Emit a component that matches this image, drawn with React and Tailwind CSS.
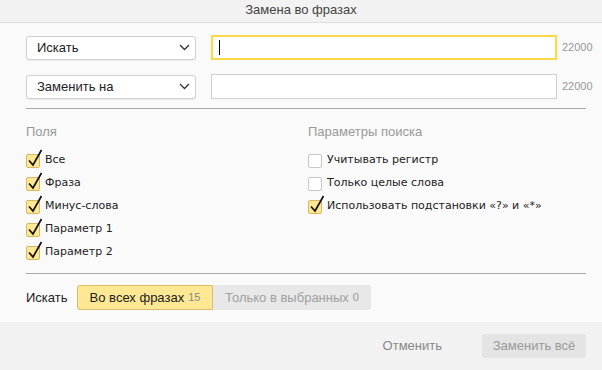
const fields = ['Все', 'Фраза', 'Минус-слова', 'Параметр 1', 'Параметр 2'];
const params = [
    { label: 'Учитывать регистр', checked: false },
    { label: 'Только целые слова', checked: false },
    { label: 'Использовать подстановки «?» и «*»', checked: true },
];

function Check({ checked, label }) {
    return (
        <div className="flex items-center h-[23px]">
            <div className="relative w-[14px] h-[14px] mr-[5px] shrink-0">
                <div className={checked
                    ? "w-[14px] h-[14px] rounded-[2px] border border-[#d5b965] bg-[#ffe894]"
                    : "w-[14px] h-[14px] rounded-[2px] border border-[#c8c8c8] bg-white"} />
                {checked && (
                    <svg className="absolute left-[1px] top-[-6px]" width="16" height="20" viewBox="0 0 16 20">
                        <path d="M2 12.5 L6 17 L14.5 2" fill="none" stroke="#111" strokeWidth="1.7" />
                    </svg>
                )}
            </div>
            <span className="text-[11px] text-[#222] font-['DejaVu_Sans',sans-serif]">{label}</span>
        </div>
    );
}

function Select({ label }) {
    return (
        <div className="w-[170px] shrink-0 h-[24px] flex items-center justify-between pl-[10px] pr-[5px] bg-white border border-[#d0d0d0] rounded-[3px] shadow-[0_1px_1px_rgba(0,0,0,0.06)]">
            <span className="text-[13px] text-[#222]">{label}</span>
            <svg width="11" height="7" viewBox="0 0 11 7">
                <path d="M1 1 L5.5 5.5 L10 1" fill="none" stroke="#333" strokeWidth="1.3" />
            </svg>
        </div>
    );
}

export default function App() {
    return (
        <div className="w-[602px] h-[370px] flex flex-col bg-[#fafafa] font-['Liberation_Sans',Arial,sans-serif] overflow-hidden">
            <div className="h-[23px] shrink-0 flex items-center justify-center bg-[#f2f2f2] border-b border-[#dcdcdc] text-[13px] text-[#444] pb-[2px]">
                Замена во фразах
            </div>

            <div className="pl-[26px] pr-[16px] pt-[12px]">
                <div className="flex items-center">
                    <Select label="Искать" />
                    <div className="ml-[15px] w-[346px] shrink-0 h-[25px] bg-white border-2 border-[#ffd84a] flex items-center pl-[6px]">
                        <div className="w-px h-[15px] bg-black" />
                    </div>
                    <span className="ml-[5px] text-[11px] text-[#999]">22000</span>
                </div>
                <div className="flex items-center mt-[14px]">
                    <Select label="Заменить на" />
                    <div className="ml-[15px] w-[346px] shrink-0 h-[25px] bg-white border border-[#cfcfcf]" />
                    <span className="ml-[5px] text-[11px] text-[#999]">22000</span>
                </div>

                <div className="mt-[9px] mr-[0px] w-[560px] h-px bg-[#a8a8a8]" />

                <div className="flex pt-[15px]">
                    <div className="w-[282px]">
                        <div className="text-[13px] text-[#999] h-[16px] leading-[16px]">Поля</div>
                        <div className="mt-[9px]">
                            {fields.map(f => <Check key={f} checked label={f} />)}
                        </div>
                    </div>
                    <div>
                        <div className="text-[13px] text-[#999] h-[16px] leading-[16px]">Параметры поиска</div>
                        <div className="mt-[9px]">
                            {params.map(p => <Check key={p.label} checked={p.checked} label={p.label} />)}
                        </div>
                    </div>
                </div>

                <div className="mt-[9px] w-[560px] h-px bg-[#a8a8a8]" />

                <div className="flex items-center mt-[11px]">
                    <span className="text-[13px] text-[#222] w-[51px]">Искать</span>
                    <div className="flex">
                        <div className="w-[136px] h-[25px] flex items-center justify-center bg-[#ffe894] border border-[#d9be6a] rounded-l-[3px] text-[13px] text-[#222]">
                            Во всех фразах<span className="ml-[4px] text-[11px] text-[#888]">15</span>
                        </div>
                        <div className="w-[158px] h-[25px] flex items-center justify-center bg-[#e8e8e8] rounded-r-[3px] text-[13px] text-[#a0a0a0]">
                            Только в выбранных<span className="ml-[4px] text-[11px] text-[#999]">0</span>
                        </div>
                    </div>
                </div>
            </div>

            <div className="mt-auto h-[48px] bg-[#f2f2f2] flex items-center justify-end pr-[16px]">
                <span className="text-[13px] text-[#888] mr-[40px]">Отменить</span>
                <div className="w-[104px] h-[24px] flex items-center justify-center bg-[#e4e4e4] rounded-[3px] text-[13px] text-[#999]">
                    Заменить всё
                </div>
            </div>
        </div>
    );
}
